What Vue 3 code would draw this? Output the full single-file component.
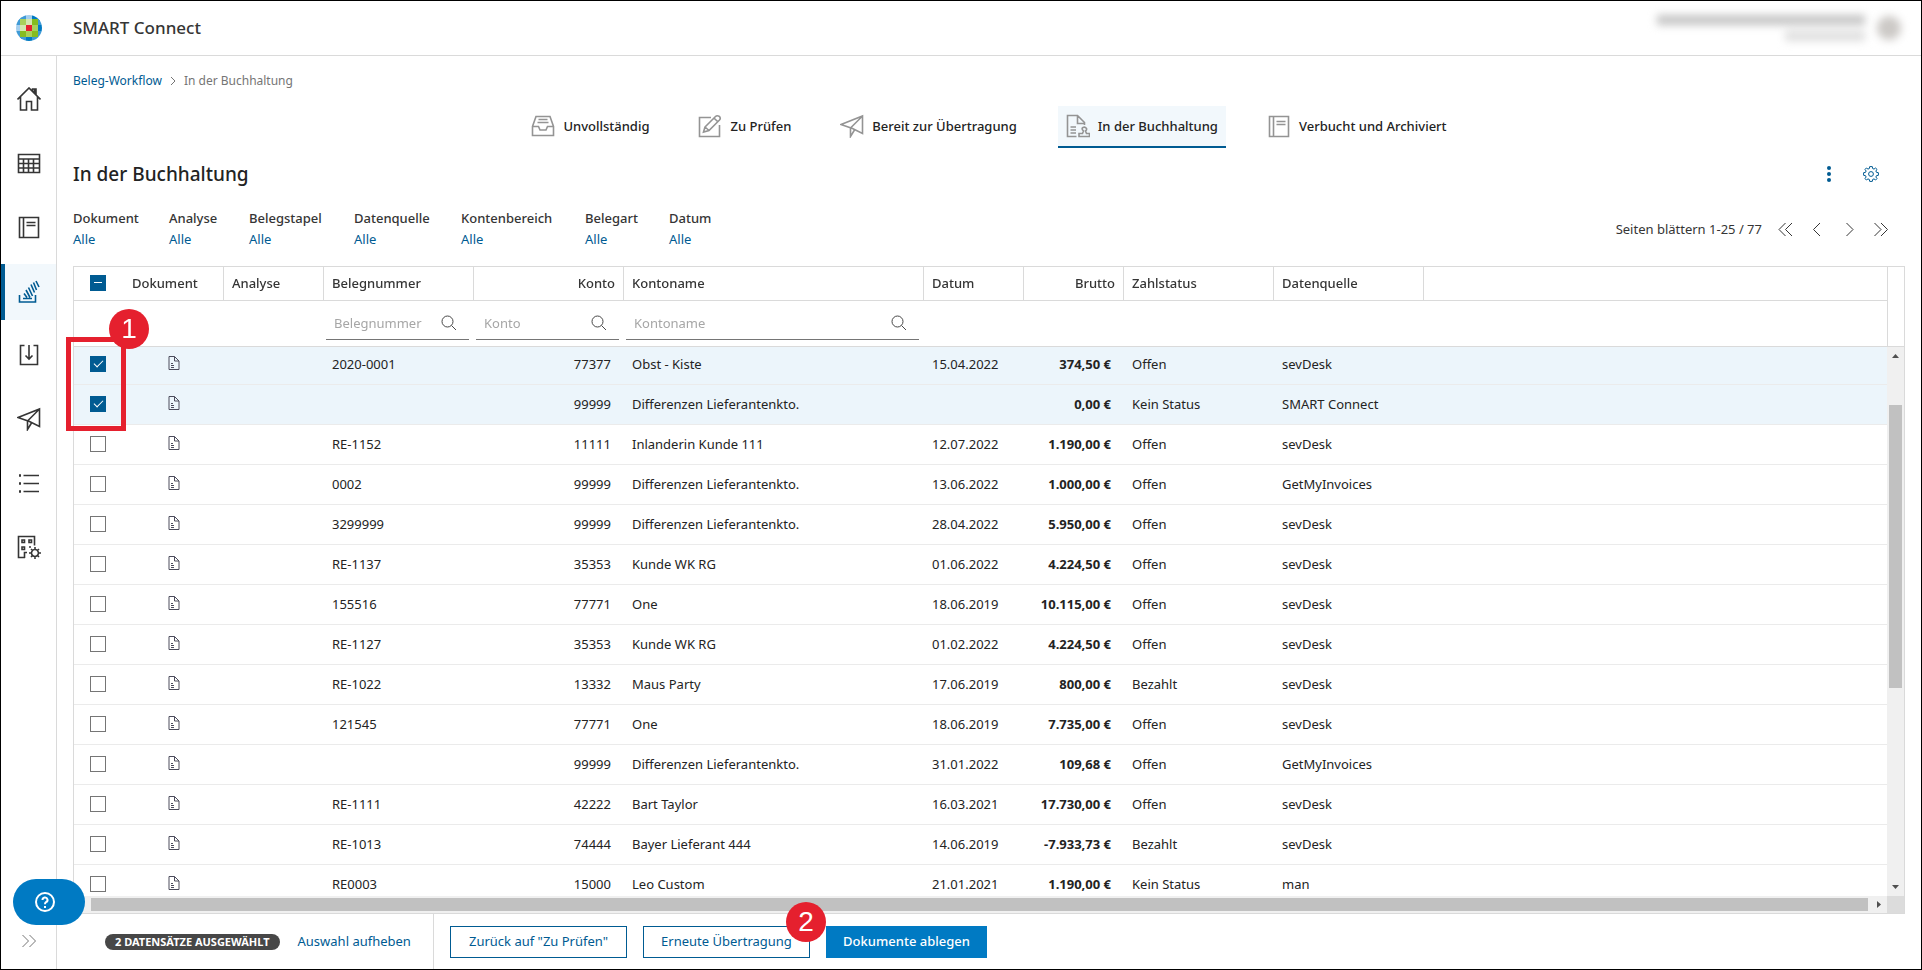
<script setup>
import { ref, onMounted } from 'vue'

const icons = {
  home: 'M0.5 12.5L12 1L23.5 12.5M3.5 10V23H9.5V14.5H14.5V23H20.5V10M15.5 4V2H19V7.5M17.5 2V6',
  calendar: 'M1.5 3.5H22.5V21.5H1.5ZM1.5 8H22.5M1.5 12.5H22.5M1.5 17H22.5M6.5 8V21.5M11.5 8V21.5M16.5 8V21.5',
  book: 'M2.5 2.5H21.5V22.5H2.5ZM6.5 2.5V22.5M9.5 7.5H18.5M9.5 10.5H18.5',
  stack: 'M2.5 16V23H18.5V16M6 19.5H15M7 14.5L10 18.5M9 11L13 18.5M11.5 8.5L15.5 17M14 5.5L17.5 13.5M16.5 3.5L19.5 11M19 2L22 8',
  download: 'M7.5 2.5H3.5V21.5H20.5V2.5H16.5M12 2V16M8.5 12.5L12 16L15.5 12.5',
  send: 'M1 10.5L22.5 2V19.5L12.5 14.5ZM22.5 2L10.5 14V22.5L14.5 16',
  list: 'M6.5 4.5H22M6.5 12.5H22M6.5 20.5H22M2 4H4M2 5H4M2 12H4M2 13H4M2 20H4M2 21H4',
  building: 'M8 22.5H1.5V1.5H17.5V10.5M5 5H7.5V7.5H5ZM12 5H14.5V7.5H12ZM5 12H7.5V14.5H5ZM7.5 23V17.5H10M12 12H14M18 14.5A3.5 3.5 0 1 1 17.9 14.5M18 12V14.5M18 21.5V24M12 18H14.5M21.5 18H24M14 14L15.5 15.5M20.5 20.5L22 22M22 14L20.5 15.5M15.5 20.5L14 22',
  inbox: 'M5 2.5H19L22.5 12.5V21.5H1.5V12.5ZM1.5 12.5H7.5L9 16H15L16.5 12.5H22.5M7.5 5.5H16.5M6.5 8.5H17.5',
  edit: 'M13 3.5H1.5V22.5H21.5V11M7 13L17.5 2.5Q19 1 21.5 2.5Q23 4.5 21.5 6L11 16.5L5.5 18ZM16 4L20 8M7 13L11 16.5',
  stamp: 'M10.5 22.5H1.5V1.5H11.5L18.5 8.5V11M11.5 1.5V9.5H18.5M4.5 13H10M4.5 16H10M4.5 19H10M13 22.5V19.5H16.5L17.5 17Q15 14.5 17 13.5Q19 12.5 20.5 14.5Q21 16 19.5 17L20.5 19.5H23.5V22.5Z',
}

const nav = [
  ['home', 'Startseite'], ['calendar', 'Kalender'], ['book', 'Buch'], ['stack', 'Beleg-Workflow'],
  ['download', 'Import'], ['send', 'Senden'], ['list', 'Liste'], ['building', 'Verwaltung'],
]
const tabs = [
  ['inbox', 'Unvollständig'], ['edit', 'Zu Prüfen'], ['send', 'Bereit zur Übertragung'],
  ['stamp', 'In der Buchhaltung'], ['book', 'Verbucht und Archiviert'],
]
const filters = ['Dokument', 'Analyse', 'Belegstapel', 'Datenquelle', 'Kontenbereich', 'Belegart', 'Datum']
const pager = [
  ['Erste Seite', 'M11.5 2L5 8.5L11.5 15M18 2L11.5 8.5L18 15'],
  ['Vorherige Seite', 'M14 2L7.5 8.5L14 15'],
  ['Nächste Seite', 'M8.5 2L15 8.5L8.5 15'],
  ['Letzte Seite', 'M4.5 2L11 8.5L4.5 15M11 2L17.5 8.5L11 15'],
]

const rows = ref([
  ['2020-0001', '77377', 'Obst - Kiste', '15.04.2022', '374,50 €', 'Offen', 'sevDesk', true],
  ['', '99999', 'Differenzen Lieferantenkto.', '', '0,00 €', 'Kein Status', 'SMART Connect', true],
  ['RE-1152', '11111', 'Inlanderin Kunde 111', '12.07.2022', '1.190,00 €', 'Offen', 'sevDesk', false],
  ['0002', '99999', 'Differenzen Lieferantenkto.', '13.06.2022', '1.000,00 €', 'Offen', 'GetMyInvoices', false],
  ['3299999', '99999', 'Differenzen Lieferantenkto.', '28.04.2022', '5.950,00 €', 'Offen', 'sevDesk', false],
  ['RE-1137', '35353', 'Kunde WK RG', '01.06.2022', '4.224,50 €', 'Offen', 'sevDesk', false],
  ['155516', '77771', 'One', '18.06.2019', '10.115,00 €', 'Offen', 'sevDesk', false],
  ['RE-1127', '35353', 'Kunde WK RG', '01.02.2022', '4.224,50 €', 'Offen', 'sevDesk', false],
  ['RE-1022', '13332', 'Maus Party', '17.06.2019', '800,00 €', 'Bezahlt', 'sevDesk', false],
  ['121545', '77771', 'One', '18.06.2019', '7.735,00 €', 'Offen', 'sevDesk', false],
  ['', '99999', 'Differenzen Lieferantenkto.', '31.01.2022', '109,68 €', 'Offen', 'GetMyInvoices', false],
  ['RE-1111', '42222', 'Bart Taylor', '16.03.2021', '17.730,00 €', 'Offen', 'sevDesk', false],
  ['RE-1013', '74444', 'Bayer Lieferant 444', '14.06.2019', '-7.933,73 €', 'Bezahlt', 'sevDesk', false],
  ['RE0003', '15000', 'Leo Custom', '21.01.2021', '1.190,00 €', 'Kein Status', 'man', false],
].map(([nr, konto, name, datum, brutto, status, quelle, checked]) =>
  ({ nr, konto, name, datum, brutto, status, quelle, checked })))

const tiles = [
  '#8fc4e8', '#409bd6', '#a5cfee', '#007ac3', '#007ac3',
  '#409bd6', '#a9d05a', '#d4e7b0', '#85bc20', '#409bd6',
  '#a5cfee', '#d4e7b0', '#e5202e', '#a9d05a', '#007ac3',
  '#409bd6', '#85bc20', '#a9d05a', '#85bc20', '#409bd6',
  '#007ac3', '#409bd6', '#007ac3', '#409bd6', '#007ac3',
]

const scroller = ref(null)
onMounted(() => { scroller.value.scrollTop = 2 })
</script>

<template>
  <div class="app">
    <header class="topbar">
      <svg class="logo" viewBox="0 0 26 26" aria-hidden="true">
        <clipPath id="disc"><circle cx="13" cy="13" r="13" /></clipPath>
        <g clip-path="url(#disc)" shape-rendering="crispEdges">
          <rect v-for="(c, i) in tiles" :key="i" :fill="c"
            :x="[0, 4, 10, 16, 22][i % 5]" :y="[0, 4, 10, 16, 22][Math.floor(i / 5)]" width="6" height="6" />
        </g>
      </svg>
      <span class="brand">SMART Connect</span>
      <div class="account" aria-hidden="true">
        <div class="who"><i class="line long"></i><i class="line short"></i></div>
        <i class="avatar"></i>
      </div>
    </header>

    <div class="shell">
      <nav class="side" aria-label="Hauptnavigation">
        <a v-for="([icon, label]) in nav" :key="icon" href="#" class="nav" :class="{ on: icon === 'stack' }" :aria-label="label">
          <svg class="ico" viewBox="0 0 24 24"><path :d="icons[icon]" /></svg>
        </a>
        <button class="expand" aria-label="Menü ausklappen">
          <svg width="16" height="16" viewBox="0 0 16 16"><path d="M1.5 2L7.5 8L1.5 14M8.5 2L14.5 8L8.5 14" /></svg>
        </button>
        <button class="help" aria-label="Hilfe">
          <svg width="20" height="20" viewBox="0 0 20 20">
            <circle cx="10" cy="10" r="9" /><path d="M7.5 8A2.5 2.5 0 1 1 11 10.2Q10 10.8 10 12.2" /><path d="M10 14V16" />
          </svg>
        </button>
      </nav>

      <main class="main">
        <div class="crumbs">
          <a href="#">Beleg-Workflow</a>
          <svg width="6" height="10" viewBox="0 0 6 10"><path d="M1 1L5 5L1 9" /></svg>
          <span>In der Buchhaltung</span>
        </div>

        <nav class="tabs" aria-label="Status">
          <a v-for="([icon, label], i) in tabs" :key="label" href="#" class="tab" :class="{ on: i === 3 }">
            <svg class="ico" viewBox="0 0 24 24"><path :d="icons[icon]" /></svg>{{ label }}
          </a>
        </nav>

        <div class="heading">
          <h1>In der Buchhaltung</h1>
          <button aria-label="Mehr">
            <svg width="16" height="18" viewBox="0 0 16 18" class="dots"><circle cx="8" cy="3" r="2" /><circle cx="8" cy="9" r="2" /><circle cx="8" cy="15" r="2" /></svg>
          </button>
          <button aria-label="Einstellungen">
            <svg width="16" height="16" viewBox="0 0 16 16" class="gear">
              <path d="M6.7 0.6H9.3L9.7 2.6L11 3.1L12.6 2L14 3.4L12.9 5L13.4 6.3L15.4 6.7V9.3L13.4 9.7L12.9 11L14 12.6L12.6 14L11 12.9L9.7 13.4L9.3 15.4H6.7L6.3 13.4L5 12.9L3.4 14L2 12.6L3.1 11L2.6 9.7L0.6 9.3V6.7L2.6 6.3L3.1 5L2 3.4L3.4 2L5 3.1L6.3 2.6Z" />
              <circle cx="8" cy="8" r="2.4" />
            </svg>
          </button>
        </div>

        <div class="filterbar">
          <div class="filters">
            <div v-for="f in filters" :key="f"><b>{{ f }}</b><a href="#">Alle</a></div>
          </div>
          <div class="pager">
            <span>Seiten blättern 1-25 / 77</span>
            <button v-for="([label, d]) in pager" :key="label" :aria-label="label">
              <svg width="22" height="17" viewBox="0 0 22 17"><path :d="d" /></svg>
            </button>
          </div>
        </div>

        <div class="grid">
          <div ref="scroller" class="scroller">
            <table>
              <colgroup>
                <col class="w50"><col class="w100"><col class="w100"><col class="w150"><col class="w150"><col class="w300">
                <col class="w100"><col class="w100"><col class="w150"><col class="w150"><col>
              </colgroup>
              <thead>
                <tr class="titles">
                  <th class="plain"><span class="boxwrap"><input type="checkbox" class="box mixed" aria-label="Alle auswählen"></span></th>
                  <th>Dokument</th><th>Analyse</th><th>Belegnummer</th><th class="num">Konto</th><th>Kontoname</th>
                  <th>Datum</th><th class="num">Brutto</th><th>Zahlstatus</th><th>Datenquelle</th><th class="plain"></th>
                </tr>
                <tr class="search">
                  <td colspan="3"></td>
                  <td v-for="p in ['Belegnummer', 'Konto', 'Kontoname']" :key="p">
                    <label class="field">
                      <input type="text" :placeholder="p" :aria-label="p">
                      <svg width="16" height="16" viewBox="0 0 16 16"><circle cx="6.5" cy="6.5" r="5.5" /><path d="M10.5 10.5L15 15" /></svg>
                    </label>
                  </td>
                  <td colspan="5"></td>
                </tr>
              </thead>
              <tbody>
                <tr v-for="(r, i) in rows" :key="i" :class="{ picked: r.checked }">
                  <td><span class="boxwrap"><input v-model="r.checked" type="checkbox" class="box" :aria-label="'Zeile ' + (i + 1)"></span></td>
                  <td class="doc">
                    <svg width="12" height="14" viewBox="0 0 12 14"><path d="M1 0.5H6.5L11 5V13.5H1ZM6.5 0.5V5H11M3 7.5H5M3 9.5H6M3 11.5H6" /></svg>
                  </td>
                  <td></td>
                  <td>{{ r.nr }}</td><td class="num">{{ r.konto }}</td><td>{{ r.name }}</td><td>{{ r.datum }}</td>
                  <td class="num sum">{{ r.brutto }}</td><td>{{ r.status }}</td><td>{{ r.quelle }}</td><td></td>
                </tr>
              </tbody>
            </table>
          </div>
          <div class="rail">
            <div class="railhead"></div>
            <div class="vbar">
              <svg width="7" height="4" viewBox="0 0 7 4"><path d="M0 4L3.5 0L7 4Z" /></svg>
              <div class="vtrack"><i></i></div>
              <svg width="7" height="4" viewBox="0 0 7 4"><path d="M0 0L3.5 4L7 0Z" /></svg>
            </div>
          </div>
          <div class="hbar"><i></i><svg width="4" height="7" viewBox="0 0 4 7"><path d="M0 0L4 3.5L0 7Z" /></svg></div>
          <div class="corner"></div>
          <div class="frame" aria-hidden="true"></div>
          <div class="mark one">1</div>
        </div>

        <footer class="actions">
          <div class="selection">
            <span class="pill">2 DATENSÄTZE AUSGEWÄHLT</span>
            <a href="#">Auswahl aufheben</a>
          </div>
          <button class="btn w177">Zurück auf "Zu Prüfen"</button>
          <button class="btn w167">Erneute Übertragung</button>
          <div class="last">
            <button class="btn primary w161">Dokumente ablegen</button>
            <div class="mark two">2</div>
          </div>
        </footer>
      </main>
    </div>
  </div>
</template>

<style>
html, body { margin: 0; background: #fff; }
</style>

<style scoped>
* { box-sizing: border-box; }
.app {
  height: 100vh; border: 1px solid #000; display: flex; flex-direction: column;
  font: 13px/20px "Noto Sans", "Open Sans", sans-serif; color: #232323; overflow: hidden;
}
a { color: #005b92; text-decoration: none; }
button { font: inherit; color: inherit; background: none; border: 0; padding: 0; cursor: pointer; }
svg { display: block; flex: none; fill: none; stroke: currentColor; }
.topbar { height: 55px; flex: none; border-bottom: 1px solid #dadada; display: flex; align-items: center; padding: 0 20px 0 15px; }
.logo { width: 26px; height: 26px; stroke: none; }
.brand { margin-left: 31px; font-size: 17px; font-weight: 500; color: #353535; }
.account { margin-left: auto; display: flex; align-items: center; gap: 12px; }
.who { display: flex; flex-direction: column; align-items: flex-end; gap: 6px; filter: blur(4px); }
.line { height: 10px; background: #c4c4c4; }
.long { width: 208px; }
.short { width: 80px; background: #dedede; }
.avatar { width: 24px; height: 24px; border-radius: 50%; background: #ccc9c6; filter: blur(4px); }

.shell { flex: 1; min-height: 0; display: flex; }
.side { position: relative; width: 56px; flex: none; border-right: 1px solid #dadada; padding-top: 16px; display: flex; flex-direction: column; gap: 8px; }
.nav { height: 56px; display: flex; align-items: center; justify-content: center; padding-bottom: 2px; color: #353535; }
.nav.on { background: #f2f8fc; box-shadow: inset 4px 0 #005b92; color: #005b92; }
.ico { width: 24px; height: 24px; stroke-width: 1.6; }
.expand { margin: auto 0 20px 20px; color: #757575; }
.help { position: absolute; left: 12px; bottom: 44px; z-index: 3; width: 72px; height: 46px; border-radius: 23px; background: #007ac3; color: #fff; padding-left: 22px; }
.help svg { stroke-width: 2; }

.main { flex: 1; min-width: 0; display: flex; flex-direction: column; }
.crumbs { display: flex; align-items: center; gap: 8px; margin: 15px 16px 0; font-size: 12px; line-height: 20px; color: #757575; }
.tabs { display: flex; justify-content: center; gap: 33px; margin-top: 15px; }
.tab { height: 42px; display: flex; align-items: center; gap: 8px; padding: 0 8px; color: #232323; font-weight: 500; border-bottom: 2px solid transparent; }
.tab .ico { color: #949494; }
.tab.on { background: #f2f8fc; border-color: #005b92; }
.heading { display: flex; align-items: center; margin: 12px 42px 0 16px; gap: 26px; height: 28px; color: #005b92; }
h1 { margin: 0 auto 0 0; font-size: 19px; line-height: 28px; font-weight: 500; color: #232323; }
.dots { fill: currentColor; stroke: none; }
.filterbar { display: flex; justify-content: space-between; align-items: center; margin: 20px 13px 0 16px; height: 42px; }
.filters { display: grid; grid-template-columns: 96px 80px 105px 107px 124px 84px auto; }
.filters div { display: flex; flex-direction: column; line-height: 21px; }
.filters b { font-weight: 500; color: #353535; }
.pager { display: flex; align-items: center; gap: 10px; color: #353535; padding-right: 16px; }
.pager span { margin-right: 2px; }

.grid { position: relative; flex: 1; min-height: 0; margin: 16px 16px 0; border: 1px solid #dadada; display: grid; grid-template: minmax(0, 1fr) 17px / minmax(0, 1fr) 17px; }
.scroller { overflow: hidden; }
table { width: 100%; table-layout: fixed; border-spacing: 0; }
.w50 { width: 50px; } .w100 { width: 100px; } .w150 { width: 150px; } .w300 { width: 300px; }
thead { position: sticky; top: 0; z-index: 1; background: #fff; }
th, td { padding: 0 8px 2px; text-align: left; white-space: nowrap; }
th { height: 34px; font-weight: 500; color: #353535; border-bottom: 1px solid #dadada; border-right: 1px solid #dadada; }
th.plain { border-right: 0; }
.search td { height: 46px; padding: 0 5px 0 2px; border-bottom: 1px solid #dadada; }
tbody td { height: 40px; border-bottom: 1px solid #ebebeb; }
.picked td { background: #ecf5fb; }
th.num { text-align: right; }
td.num { text-align: right; padding-right: 13px; }
.sum { font-weight: 700; }
.boxwrap { display: flex; padding-left: 8px; }
.box { appearance: none; width: 16px; height: 16px; margin: 0; border: 1px solid #757575; background: #fff; position: relative; }
.box:checked, .mixed { background: #005b92; border-color: #005b92; }
.box:checked::after { content: ""; position: absolute; left: 3px; top: 3px; width: 8px; height: 4px; border: solid #fff; border-width: 0 0 1px 1px; transform: rotate(-45deg); }
.mixed::after { content: ""; position: absolute; left: 3px; top: 6px; width: 8px; height: 1px; background: #fff; }
td.doc { padding-bottom: 4px; }
.doc svg { margin: 0 auto; color: #4c4c5c; }
.field { display: flex; align-items: center; height: 32px; border-bottom: 1px solid #757575; padding: 0 12px 0 8px; color: #474747; }
.field input { flex: 1; min-width: 0; border: 0; outline: 0; padding: 0; font: inherit; background: none; }
.field input::placeholder { color: #a6a6a6; opacity: 1; }
.rail { display: flex; flex-direction: column; }
.railhead { height: 80px; border: solid #dadada; border-width: 0 0 1px 1px; }
.vbar { flex: 1; background: #f0f0f0; display: flex; flex-direction: column; align-items: center; padding: 7px 0; }
.vbar svg, .hbar svg { fill: #505050; stroke: none; }
.vtrack { flex: 1; width: 13px; padding-top: 47px; }
.vtrack i { display: block; height: 59%; background: #c1c1c1; }
.hbar { background: #f0f0f0; display: flex; align-items: center; gap: 9px; padding: 0 6px 0 17px; }
.hbar i { flex: 1; height: 13px; background: #c1c1c1; }
.corner { background: #dcdcdc; }
.frame { position: absolute; z-index: 2; left: -8px; top: 70px; width: 60px; height: 94px; border: 5px solid #e5202e; }
.mark { position: absolute; z-index: 3; width: 40px; height: 40px; border-radius: 50%; background: #e5202e; color: #fff; font: 28px/40px "Liberation Sans", Arial, sans-serif; text-align: center; }
.one { left: 35px; top: 42px; }

.actions { flex: none; height: 55px; display: flex; align-items: center; gap: 16px; }
.selection { align-self: stretch; width: 377px; border-right: 1px solid #dadada; display: flex; align-items: center; gap: 18px; padding-left: 48px; }
.selection a { padding-bottom: 2px; }
.pill { height: 16px; border-radius: 8px; background: #474747; color: #fff; font-size: 11px; line-height: 16px; font-weight: 700; padding: 0 10px; }
.btn { height: 32px; border: 1px solid #005b92; padding-bottom: 2px; color: #005b92; white-space: nowrap; }
.primary { background: #007ac3; border-color: #007ac3; color: #fff; font-weight: 500; }
.w177 { width: 177px; } .w167 { width: 167px; } .w161 { width: 161px; }
.last { position: relative; }
.two { left: -40px; top: -24px; }
</style>
